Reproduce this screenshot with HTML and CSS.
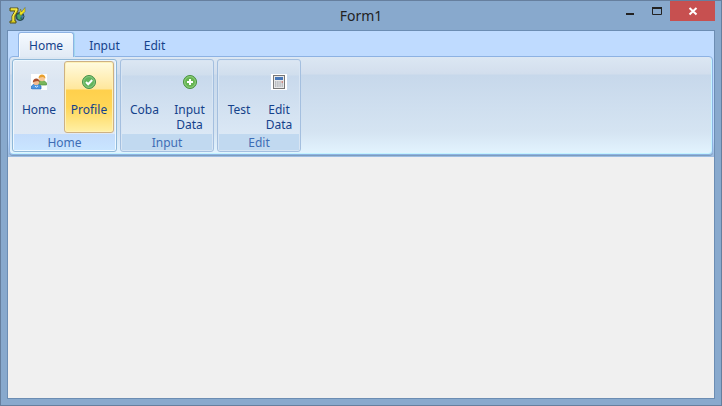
FILE: index.html
```html
<!DOCTYPE html>
<html lang="en">
<head>
<meta charset="utf-8">
<title>Form1</title>
<link rel="stylesheet" href="styles.css">
</head>
<body>
<div class="window">
  <header class="titlebar">
    <svg class="app-icon" viewBox="0 0 17 17" aria-hidden="true">
      <circle cx="11" cy="9.5" r="4" fill="#286b62" stroke="#294651"/>
      <path d="M8 8l3-1 2 2-2 2 1 2-3-1z" fill="#4da868"/>
      <path d="M12 8l3 1-2 3z" fill="#4c79aa"/>
      <path d="M1 1h8v3L6 9v5h1v2H1v-2h2V9l3-5H1z" fill="#d8cc1c" stroke="#57521b"/>
      <path d="M2 2h6L4 9v5" fill="none" stroke="#fff45a"/>
      <path d="M10.500 7l1-5 1 3 3.500-4.500v4l-4 4z" fill="#f2e51d" stroke="#69641c" stroke-width=".5"/>
    </svg>
    <h1 class="title">Form1</h1>
    <div class="controls">
      <button class="control" type="button" aria-label="Minimize">
        <svg viewBox="0 0 10 10"><path d="M1 8h8" stroke="#222" stroke-width="2"/></svg>
      </button>
      <button class="control" type="button" aria-label="Maximize">
        <svg viewBox="0 0 10 10"><path d="M.5 1v7.5h9V1" fill="none" stroke="#222"/><path d="M0 2h10" stroke="#222" stroke-width="2"/></svg>
      </button>
      <button class="control close" type="button" aria-label="Close">
        <svg viewBox="0 0 10 10"><path d="M1.500 2l7 6.500M8.500 2l-7 6.500" stroke="#fff" stroke-width="2"/></svg>
      </button>
    </div>
  </header>
  <main class="client">
    <div class="ribbon">
      <nav class="tabs" aria-label="Ribbon tabs">
        <button class="tab active" type="button">Home</button>
        <button class="tab" type="button">Input</button>
        <button class="tab" type="button">Edit</button>
      </nav>
      <div class="panel">
        <section class="group hot">
          <div class="commands">
            <button class="command wide" type="button">
              <span class="icon"><svg viewBox="0 0 16 16">
                <path d="M0 0h16v16H0z" fill="#fff"/>
                <path d="M7 11V8l2-1.500h4L15.500 9v2z" fill="#79b65a" stroke="#4d9142" stroke-width=".7"/>
                <circle cx="11" cy="4.200" r="3" fill="#f6c797"/>
                <path d="M7.500 4.500C7.500-.7 14.500-.7 14.500 4.500L12 3 9 3.500z" fill="#e8a02d"/>
                <path d="M.5 15v-3L3 10h4l3 2v3z" fill="#4b96e2" stroke="#2f6fba" stroke-width=".7"/>
                <circle cx="5.200" cy="8.200" r="2.900" fill="#f2bb91"/>
                <path d="M1.800 8.500c0-5.200 7-5.200 7 0L7 7 4 7.500z" fill="#a84f2d"/>
                <path d="M4 12l1.300 1.200L7 12" fill="none" stroke="#d7ecff"/>
              </svg></span>
              <span>Home</span>
            </button>
            <button class="command wide selected" type="button">
              <span class="icon"><svg viewBox="0 0 16 16">
                <circle cx="8" cy="8" r="6.500" fill="#62b45c" stroke="#46904a"/>
                <circle cx="8" cy="8" r="5.400" fill="none" stroke="#93cf8d" stroke-width=".8"/>
                <path d="M5 8l2.200 2.200L11.200 6" fill="none" stroke="#fff" stroke-width="2"/>
              </svg></span>
              <span>Profile</span>
            </button>
          </div>
          <h2 class="caption">Home</h2>
        </section>
        <section class="group">
          <div class="commands">
            <button class="command medium" type="button"><span class="icon"></span><span>Coba</span></button>
            <button class="command medium" type="button">
              <span class="icon"><svg viewBox="0 0 16 16">
                <circle cx="8" cy="8" r="6.500" fill="#65b552" stroke="#47913f"/>
                <circle cx="8" cy="8" r="5.400" fill="none" stroke="#a0d58c" stroke-width=".8"/>
                <path d="M8 5v6M5 8h6" stroke="#fff" stroke-width="2"/>
              </svg></span>
              <span>Input<br>Data</span>
            </button>
          </div>
          <h2 class="caption">Input</h2>
        </section>
        <section class="group">
          <div class="commands">
            <button class="command narrow" type="button"><span class="icon"></span><span>Test</span></button>
            <button class="command narrow" type="button">
              <span class="icon"><svg viewBox="0 0 16 16">
                <path d="M0 0h16v16H0z" fill="#fff"/>
                <rect x="2.500" y="1.500" width="11" height="13" fill="#e8e8e8" stroke="#777"/>
                <path d="M4 3h8v3H4z" fill="#4777b8"/>
                <path d="M4 8h8M4 10h8M4 12h8" stroke="#8c929c" stroke-dasharray="1.400 .8"/>
                <path d="M10.600 8H12" stroke="#e05242"/>
              </svg></span>
              <span>Edit<br>Data</span>
            </button>
          </div>
          <h2 class="caption">Edit</h2>
        </section>
      </div>
    </div>
  </main>
</div>
</body>
</html>
```
FILE: styles.css
```css
* { box-sizing: border-box; }
body {
  margin: 0;
  font: 12px/15px "Noto Sans", "Open Sans", sans-serif;
  color: #15428b;
}
button {
  margin: 0;
  padding: 0;
  border: 0;
  background: none;
  font: inherit;
  color: inherit;
}
h1, h2 { margin: 0; font-weight: 400; }
svg { display: block; }
.window {
  display: flex;
  flex-direction: column;
  min-height: 100vh;
  padding: 0 6px 6px;
  border: 1px solid #667f9e;
  background: #88a9cd;
}
.titlebar {
  display: grid;
  grid-template-columns: 1fr auto 1fr;
  height: 29px;
}
.app-icon { width: 17px; height: 17px; margin: 6px 0 0 2px; }
.title {
  color: #222;
  font-size: 14px;
  line-height: 29px;
}
.controls { display: flex; justify-content: flex-end; height: 20px; }
.control {
  display: grid;
  place-items: center;
  width: 27px;
}
.control svg { width: 10px; height: 10px; }
.close { width: 45px; background: #c75050; }
.client {
  flex: 1;
  border: 1px solid #6c8db3;
  background: #f0f0f0;
}
.ribbon {
  padding: 1px 1px 2px;
  background: linear-gradient(#bfdbff 85%, #9dbce2);
}
.tabs { display: flex; padding-left: 9px; }
.tab {
  height: 24px;
  padding: 2px 11px 0;
  border: 1px solid transparent;
}
.tab.active {
  position: relative;
  padding: 0 10px;
  height: 25px;
  margin-right: 3px;
  margin-bottom: -1px;
  border-color: #8db2e3;
  border-bottom: 0;
  border-radius: 3px 3px 0 0;
  background: linear-gradient(#f5faff, #e1eaf5);
  box-shadow: inset 1px 1px #f8fcff, 1px 0 #a1d8ef;
}
.panel {
  display: flex;
  gap: 3px;
  padding: 2px;
  border: 1px solid #8db2e3;
  border-radius: 4px;
  background: linear-gradient(#dce7f3 0, #d2deed 17px, #c7d8eb 18px, #d5e4f2 75px, #e3f4ff 100%);
  box-shadow: inset -1px -1px #c3f4ff, 0 1px #7d9ebd;
}
.group {
  border: 1px solid #a4bfdf;
  border-radius: 3px;
  background: linear-gradient(#dce7f3 0, #d0deed 15px, #c8d9ec 16px, #dbe8f5 75px);
  box-shadow: inset 0 0 0 1px #d8e5f3;
}
.group.hot {
  border-color: #8fb8d8;
  background: linear-gradient(#e4ecf5, #dce6f2 20px, #e1eaf5);
  box-shadow: inset 0 0 0 1px #eef8ff;
}
.commands {
  display: flex;
  height: 74px;
  padding: 1px 1px 0;
}
.command {
  display: flex;
  flex-direction: column;
  align-items: center;
  height: 72px;
  padding-top: 12px;
  border: 1px solid transparent;
  border-radius: 3px;
  text-align: center;
}
.icon { width: 16px; height: 16px; margin-bottom: 12px; }
.wide { width: 50px; }
.medium { width: 45px; }
.narrow { width: 40px; }
.selected {
  margin-right: 1px;
  border-color: #cdb184;
  background: linear-gradient(#fffbe0, #ffe79c 27px, #ffd04c 28px, #ffd657 45px, #fff0a6);
  box-shadow: inset 0 0 0 1px #fff2b7;
}
.caption {
  height: 16px;
  margin: 0 1px 1px;
  background: #c1d9f0;
  color: #3e6db5;
  font-size: 12px;
  line-height: 18px;
  text-align: center;
}
.hot .caption { background: linear-gradient(#c4dcfb, #c9e5ff); }
```
